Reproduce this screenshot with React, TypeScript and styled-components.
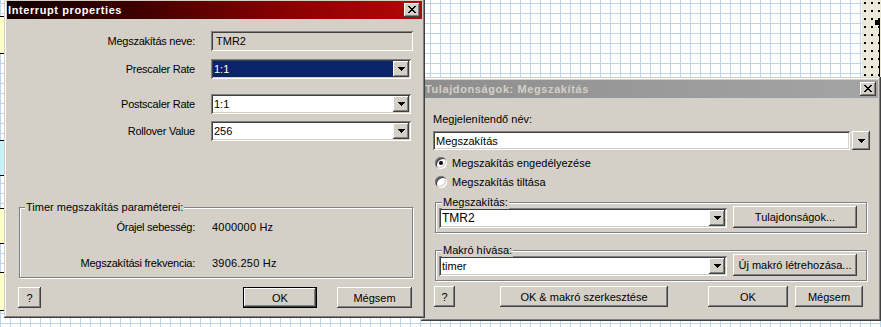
import React from 'react';
import styled, { createGlobalStyle, css } from 'styled-components';

const FACE = '#d4d0c8';

const GlobalStyle = createGlobalStyle`
  html, body { margin: 0; padding: 0; }
  body {
    font-family: "Liberation Sans", Arial, sans-serif;
    font-size: 11px;
    color: #000;
    background: #fff;
  }
`;

const raised = css`
  box-shadow: inset -1px -1px #404040, inset 1px 1px #fff, inset -2px -2px #808080, inset 2px 2px ${FACE};
`;
const sunken = css`
  box-shadow: inset 1px 1px #808080, inset -1px -1px #fff, inset 2px 2px #404040, inset -2px -2px ${FACE};
`;

const Desktop = styled.div`
  position: relative;
  width: 881px;
  height: 327px;
  overflow: hidden;
  background-color: #fff;
  background-image: linear-gradient(to right, #bcd5ea 1px, transparent 1px),
    linear-gradient(to bottom, #bcd5ea 1px, transparent 1px);
  background-size: 10px 10px;
  background-position: 0 3px;
`;

const DotStrip = styled.div`
  position: absolute;
  left: 862px;
  top: 0;
  width: 19px;
  height: 80px;
  background-color: #ece9d8;
  background-image: radial-gradient(circle at 1px 1px, #000 0.9px, transparent 1.1px);
  background-size: 7px 8px;
  background-position: 2px 2px;
`;

const Handle = styled.div`
  position: absolute;
  left: 875px;
  top: 20px;
  width: 5px;
  height: 5px;
  background: #000;
`;

const HandleLine = styled.div`
  position: absolute;
  left: 879px;
  top: 25px;
  width: 1px;
  height: 55px;
  background: #000;
`;

const CanvasBlock = styled.div<{ $top: number; $h: number; $color: string }>`
  position: absolute;
  left: 0;
  top: ${p => p.$top}px;
  width: 5px;
  height: ${p => p.$h}px;
  background: ${p => p.$color};
  border-top: 1px solid #000;
  border-bottom: 1px solid #000;
`;

const Window = styled.div<{ $x: number; $y: number; $w: number; $h: number }>`
  position: absolute;
  left: ${p => p.$x}px;
  top: ${p => p.$y}px;
  width: ${p => p.$w}px;
  height: ${p => p.$h}px;
  box-sizing: border-box;
  padding: 3px;
  background: ${FACE};
  box-shadow: inset -1px -1px #404040, inset 1px 1px ${FACE}, inset -2px -2px #808080, inset 2px 2px #fff;
  display: flex;
  flex-direction: column;
`;

const TitleBar = styled.div<{ $active: boolean }>`
  height: 18px;
  flex: none;
  display: flex;
  align-items: center;
  padding: 0 2px 0 1px;
  background: ${p =>
    p.$active
      ? 'linear-gradient(90deg, #120000 0%, #3c0000 30%, #860000 65%, #b40808 100%)'
      : 'linear-gradient(90deg, #8e8e8e 0%, #9c9c9c 60%, #a4a4a4 100%)'};
  color: ${p => (p.$active ? '#fff' : '#d4d0c8')};
  font-weight: bold;
  font-size: 11px;
  letter-spacing: 0.6px;
`;

const TitleText = styled.span`
  flex: 1;
  white-space: nowrap;
  overflow: hidden;
`;

const CloseButton = styled.div`
  width: 16px;
  height: 14px;
  box-sizing: border-box;
  background: ${FACE};
  ${raised};
  display: flex;
  align-items: center;
  justify-content: center;
  padding-bottom: 1px;
`;

const Body = styled.div`
  flex: 1;
  display: flex;
  flex-direction: column;
`;

const FormRow = styled.div<{ $mt: number; $labelW: number; $gap: number; $h?: number }>`
  display: grid;
  grid-template-columns: ${p => p.$labelW}px auto;
  column-gap: ${p => p.$gap}px;
  align-items: center;
  margin-top: ${p => p.$mt}px;
  height: ${p => p.$h ?? 20}px;
`;

const Label = styled.span`
  text-align: right;
  white-space: nowrap;
  letter-spacing: -0.25px;
`;

const Value = styled.span`
  white-space: nowrap;
  letter-spacing: 0.2px;
`;

const ReadOnlyField = styled.div<{ $w: number }>`
  width: ${p => p.$w}px;
  height: 20px;
  box-sizing: border-box;
  background: ${FACE};
  ${sunken};
  display: flex;
  align-items: center;
  padding-left: 5px;
`;

const ComboFrame = styled.div<{ $w: number; $h: number }>`
  width: ${p => p.$w}px;
  height: ${p => p.$h}px;
  box-sizing: border-box;
  padding: 2px;
  background: #fff;
  ${sunken};
  display: flex;
`;

const ComboValue = styled.div<{ $selected?: boolean; $fs: number }>`
  flex: 1;
  display: flex;
  align-items: center;
  padding-left: 1px;
  font-size: ${p => p.$fs}px;
  background: ${p => (p.$selected ? '#0a246a' : 'transparent')};
  color: ${p => (p.$selected ? '#fff' : '#000')};
  white-space: nowrap;
  overflow: hidden;
`;

const DropButton = styled.div<{ $w?: number; $h?: number }>`
  width: ${p => p.$w ?? 16}px;
  ${p => (p.$h ? `height: ${p.$h}px;` : '')}
  flex: none;
  box-sizing: border-box;
  background: ${FACE};
  ${raised};
  display: flex;
  align-items: center;
  justify-content: center;
`;

const EditField = styled.div<{ $w: number; $h: number }>`
  width: ${p => p.$w}px;
  height: ${p => p.$h}px;
  box-sizing: border-box;
  background: #fff;
  ${sunken};
  display: flex;
  align-items: center;
  padding-left: 3px;
`;

const SplitComboRow = styled.div`
  display: flex;
  gap: 2px;
  margin: 5px 0 0 9px;
`;

const TextLine = styled.div<{ $mt: number; $ml: number }>`
  margin: ${p => p.$mt}px 0 0 ${p => p.$ml}px;
  line-height: 13px;
  white-space: nowrap;
`;

const RadioRow = styled.label<{ $mt: number }>`
  display: flex;
  align-items: center;
  gap: 5px;
  height: 16px;
  margin: ${p => p.$mt}px 0 0 11px;
  white-space: nowrap;
`;

const RadioCircle = styled.span`
  width: 12px;
  height: 12px;
  flex: none;
  border-radius: 50%;
  background: #fff;
  box-shadow: inset 1px 1px #808080, inset -1px -1px #fff, inset 2px 2px #404040, inset -2px -2px ${FACE};
  display: flex;
  align-items: center;
  justify-content: center;
`;

const RadioDot = styled.span`
  width: 4px;
  height: 4px;
  border-radius: 50%;
  background: #000;
`;

const GroupBox = styled.div<{ $mt: number; $ml: number; $w: number; $h: number }>`
  position: relative;
  box-sizing: border-box;
  margin: ${p => p.$mt}px 0 0 ${p => p.$ml}px;
  width: ${p => p.$w}px;
  height: ${p => p.$h}px;
  border: 1px solid #808080;
  box-shadow: inset 1px 1px #fff, 1px 1px #fff;
`;

const Legend = styled.span<{ $x: number }>`
  position: absolute;
  top: -7px;
  left: ${p => p.$x}px;
  padding: 0 1px;
  line-height: 13px;
  background: ${FACE};
  white-space: nowrap;
`;

const TimerGroupContent = styled.div`
  display: flex;
  flex-direction: column;
  padding-top: 12px;
`;

const GroupControls = styled.div`
  box-sizing: border-box;
  height: 100%;
  display: flex;
  align-items: flex-end;
  padding: 0 9px 4px 3px;
  gap: 6px;
`;

const ButtonRow = styled.div<{ $mt: number; $pl: number; $pr: number }>`
  display: flex;
  align-items: center;
  margin-top: ${p => p.$mt}px;
  padding: 0 ${p => p.$pr}px 0 ${p => p.$pl}px;
`;

const Button = styled.button<{ $w: number; $h?: number; $ml?: number; $default?: boolean }>`
  width: ${p => p.$w}px;
  height: ${p => p.$h ?? 21}px;
  margin-left: ${p => (p.$ml === undefined ? '0' : `${p.$ml}px`)};
  box-sizing: border-box;
  border: none;
  padding: 0;
  font: inherit;
  color: #000;
  background: ${FACE};
  white-space: nowrap;
  ${p =>
    p.$default
      ? css`
          box-shadow: inset 0 0 0 1px #000, inset -2px -2px #404040, inset 2px 2px #fff,
            inset -3px -3px #808080;
        `
      : raised};
`;

const Spacer = styled.div`
  flex: 1;
`;

const X_PIXELS: [number, number, number][] = [
  [0, 0, 2], [6, 0, 2], [1, 1, 2], [5, 1, 2], [2, 2, 4], [3, 3, 2],
  [2, 4, 4], [1, 5, 2], [5, 5, 2], [0, 6, 2], [6, 6, 2],
];

function CloseGlyph() {
  return (
    <svg width="8" height="7" viewBox="0 0 8 7" shapeRendering="crispEdges">
      {X_PIXELS.map(([x, y, w], i) => (
        <rect key={i} x={x} y={y} width={w} height={1} fill="#000" />
      ))}
    </svg>
  );
}

function ArrowGlyph() {
  return (
    <svg width="7" height="4" viewBox="0 0 7 4" shapeRendering="crispEdges">
      <rect x={0} y={0} width={7} height={1} fill="#000" />
      <rect x={1} y={1} width={5} height={1} fill="#000" />
      <rect x={2} y={2} width={3} height={1} fill="#000" />
      <rect x={3} y={3} width={1} height={1} fill="#000" />
    </svg>
  );
}

function ComboBox({ w, h = 20, value, selected, fs = 11 }: { w: number; h?: number; value: string; selected?: boolean; fs?: number }) {
  return (
    <ComboFrame $w={w} $h={h}>
      <ComboValue $selected={selected} $fs={fs}>{value}</ComboValue>
      <DropButton>
        <ArrowGlyph />
      </DropButton>
    </ComboFrame>
  );
}

function Radio({ checked, label, mt }: { checked?: boolean; label: string; mt: number }) {
  return (
    <RadioRow $mt={mt}>
      <RadioCircle>{checked && <RadioDot />}</RadioCircle>
      {label}
    </RadioRow>
  );
}

function InterruptDialog() {
  return (
    <Window $x={4} $y={-2} $w={421} $h={320}>
      <TitleBar $active>
        <TitleText>Interrupt properties</TitleText>
        <CloseButton><CloseGlyph /></CloseButton>
      </TitleBar>
      <Body>
        <FormRow $mt={12} $labelW={188} $gap={16}>
          <Label>Megszakítás neve:</Label>
          <ReadOnlyField $w={202}>TMR2</ReadOnlyField>
        </FormRow>
        <FormRow $mt={8} $labelW={188} $gap={16}>
          <Label>Prescaler Rate</Label>
          <ComboBox w={200} value="1:1" selected />
        </FormRow>
        <FormRow $mt={15} $labelW={188} $gap={16}>
          <Label>Postscaler Rate</Label>
          <ComboBox w={200} value="1:1" />
        </FormRow>
        <FormRow $mt={7} $labelW={188} $gap={16}>
          <Label>Rollover Value</Label>
          <ComboBox w={200} value="256" />
        </FormRow>
        <GroupBox $mt={66} $ml={12} $w={394} $h={71}>
          <Legend $x={5}>Timer megszakítás paraméterei:</Legend>
          <TimerGroupContent>
            <FormRow $mt={0} $labelW={175} $gap={17} $h={14}>
              <Label>Órajel sebesség:</Label>
              <Value>4000000 Hz</Value>
            </FormRow>
            <FormRow $mt={22} $labelW={175} $gap={17} $h={14}>
              <Label>Megszakítási frekvencia:</Label>
              <Value>3906.250 Hz</Value>
            </FormRow>
          </TimerGroupContent>
        </GroupBox>
        <ButtonRow $mt={9} $pl={11} $pr={10}>
          <Button $w={23}>?</Button>
          <Spacer />
          <Button $w={74} $default>OK</Button>
          <Button $w={75} $ml={20}>Mégsem</Button>
        </ButtonRow>
      </Body>
    </Window>
  );
}

function PropertiesDialog() {
  return (
    <Window $x={421} $y={77} $w={460} $h={244}>
      <TitleBar $active={false}>
        <TitleText>Tulajdonságok: Megszakítás</TitleText>
        <CloseButton><CloseGlyph /></CloseButton>
      </TitleBar>
      <Body>
        <TextLine $mt={15} $ml={9}>Megjelenítendő név:</TextLine>
        <SplitComboRow>
          <EditField $w={417} $h={19}>Megszakítás</EditField>
          <DropButton $w={18} $h={19}>
            <ArrowGlyph />
          </DropButton>
        </SplitComboRow>
        <Radio mt={5} checked label="Megszakítás engedélyezése" />
        <Radio mt={3} label="Megszakítás tiltása" />
        <GroupBox $mt={12} $ml={11} $w={432} $h={31}>
          <Legend $x={6}>Megszakítás:</Legend>
          <GroupControls>
            <ComboBox w={288} value="TMR2" fs={12} />
            <Button $w={124} $h={22}>Tulajdonságok...</Button>
          </GroupControls>
        </GroupBox>
        <GroupBox $mt={17} $ml={11} $w={432} $h={31}>
          <Legend $x={6}>Makró hívása:</Legend>
          <GroupControls>
            <ComboBox w={288} value="timer" />
            <Button $w={124} $h={22}>Új makró létrehozása...</Button>
          </GroupControls>
        </GroupBox>
        <ButtonRow $mt={5} $pl={10} $pr={0}>
          <Button $w={21}>?</Button>
          <Button $w={168} $ml={45}>OK &amp; makró szerkesztése</Button>
          <Button $w={80} $ml={40}>OK</Button>
          <Button $w={68} $ml={7}>Mégsem</Button>
        </ButtonRow>
      </Body>
    </Window>
  );
}

export default function App() {
  return (
    <>
      <GlobalStyle />
      <Desktop>
        <CanvasBlock $top={16} $h={36} $color="#ffffc8" />
        <CanvasBlock $top={140} $h={34} $color="#c8f0f8" />
        <CanvasBlock $top={208} $h={34} $color="#ffffc8" />
        <CanvasBlock $top={272} $h={37} $color="#ffffc8" />
        <DotStrip />
        <Handle />
        <HandleLine />
        <PropertiesDialog />
        <InterruptDialog />
      </Desktop>
    </>
  );
}
